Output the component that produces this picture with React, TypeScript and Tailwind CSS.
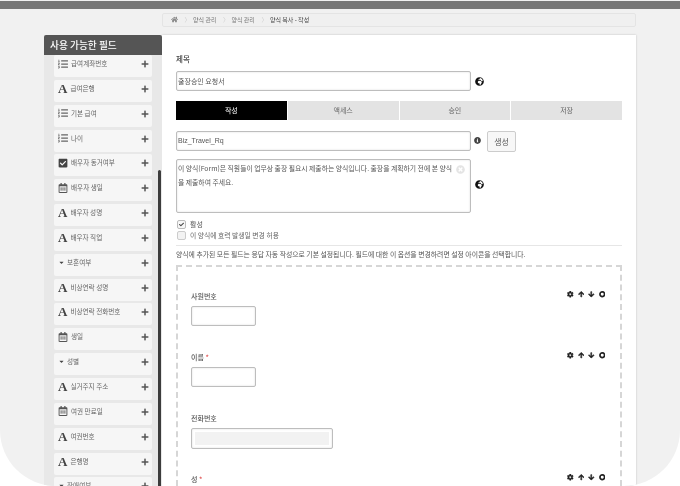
import React from "react";
import {
  FaArrowDown,
  FaArrowUp,
  FaCaretDown,
  FaCheck,
  FaCheckSquare,
  FaCog,
  FaGlobeAfrica,
  FaHome,
  FaInfoCircle,
  FaListOl,
  FaPlus,
  FaRegCalendarAlt,
  FaTimesCircle,
} from "react-icons/fa";

type FieldKind = "list" | "text" | "check" | "date" | "select";

const fields: { kind: FieldKind; label: string }[] = [
  { kind: "list", label: "급여계좌번호" },
  { kind: "text", label: "급여은행" },
  { kind: "list", label: "기본 급여" },
  { kind: "list", label: "나이" },
  { kind: "check", label: "배우자 동거여부" },
  { kind: "date", label: "배우자 생일" },
  { kind: "text", label: "배우자 성명" },
  { kind: "text", label: "배우자 직업" },
  { kind: "select", label: "보훈여부" },
  { kind: "text", label: "비상연락 성명" },
  { kind: "text", label: "비상연락 전화번호" },
  { kind: "date", label: "생일" },
  { kind: "select", label: "성별" },
  { kind: "text", label: "실거주지 주소" },
  { kind: "date", label: "여권 만료일" },
  { kind: "text", label: "여권번호" },
  { kind: "text", label: "은행명" },
  { kind: "select", label: "장애여부" },
];

const FieldIcon = ({ kind }: { kind: FieldKind }) => {
  if (kind === "text")
    return <span className="font-['Liberation_Serif',serif] text-[13px] font-bold leading-none text-[#444] mr-[3px]">A</span>;
  if (kind === "list") return <FaListOl className="text-[10px] text-[#666] mr-[3px]" />;
  if (kind === "check") return <FaCheckSquare className="text-[10px] text-[#444] mr-[3px]" />;
  if (kind === "date") return <FaRegCalendarAlt className="text-[10px] text-[#555] mr-[3px]" />;
  return <FaCaretDown className="text-[7px] text-[#444] mr-[2px]" />;
};

const FieldRow = ({ kind, label }: { kind: FieldKind; label: string }) => (
  <div className="h-[22px] shrink-0 bg-[#f6f6f6] rounded-[2px] flex items-start pt-[2px] pl-[4px] pr-[3px]">
    <div className="flex items-center h-[13px] flex-1 min-w-0">
      <FieldIcon kind={kind} />
      <span className="text-[6.6px] text-[#666] whitespace-nowrap mt-[1px]">{label}</span>
    </div>
    <FaPlus className="text-[8px] text-[#555] mt-[3px] shrink-0" />
  </div>
);

const inputBox = "border border-[#bdbdbd] rounded-[2px] bg-white shadow-[inset_0_0_2px_rgba(0,0,0,0.15)]";

const Tab = ({ label, active }: { label: string; active?: boolean }) => (
  <div
    className={`flex-1 flex items-center justify-center text-[7px] ${
      active ? "bg-black text-white" : "bg-[#e3e3e3] text-[#666]"
    }`}
  >
    {label}
  </div>
);

const FormField = ({
  label,
  required,
  boxClass,
  tools,
  children,
}: {
  label: string;
  required?: boolean;
  boxClass: string;
  tools?: boolean;
  children?: React.ReactNode;
}) => (
  <div className="h-[61px] shrink-0 flex flex-col">
    <div className="h-[23px] flex items-start justify-between">
      <span className="text-[7px] text-[#555] font-medium leading-[14px] mt-[6px]">
        {label}
        {required && <span className="text-[#e05050]"> *</span>}
      </span>
      {tools && (
        <span className="flex items-center gap-[4px] text-[#222] text-[6.5px] mt-[8px]">
          <FaCog className="stroke-[20]" />
          <FaArrowUp className="stroke-[40]" />
          <FaArrowDown className="stroke-[40]" />
          <svg viewBox="0 0 7 7" className="w-[6.5px] h-[6.5px]">
            <circle cx="3.5" cy="3.5" r="2.5" fill="none" stroke="currentColor" strokeWidth="1.8" />
          </svg>
        </span>
      )}
    </div>
    <div className={`${inputBox} ${boxClass}`}>{children}</div>
  </div>
);

export default function App() {
  return (
    <div className="w-[680px] h-[486px] bg-white overflow-hidden font-['Noto_Sans_CJK_KR','Liberation_Sans',sans-serif] blur-[0.4px]">
      <div className="h-full bg-[#f1f1f1] rounded-b-[56px] overflow-hidden flex flex-col pt-px">
        <div className="h-2 shrink-0 bg-[#777]" />
        <div className="flex-1 min-h-0 pl-[44px] pr-[44px] pt-1 flex flex-col">
          {/* breadcrumb */}
          <div className="ml-[118px] h-[14px] shrink-0 bg-[#f0f0f0] border border-[#e4e4e4] rounded-[2px] flex items-center pl-[8px] pb-[2px] text-[6px] text-[#777] gap-[6.5px]">
            <FaHome className="text-[7px] text-[#888]" />
            <span className="text-[#ccc]">〉</span>
            <span className="-ml-[4px]">양식 관리</span>
            <span className="text-[#ccc]">〉</span>
            <span className="-ml-[4px]">양식 관리</span>
            <span className="text-[#ccc]">〉</span>
            <span className="-ml-[4px] text-[#444]">양식 복사 - 작성</span>
          </div>

          <div className="flex flex-1 min-h-0 mt-[8px]">
            {/* sidebar */}
            <div className="w-[118px] shrink-0 relative flex flex-col bg-[#e8e8e8] overflow-hidden">
              <div className="h-5 shrink-0 bg-[#555] rounded-t-[2px] text-white text-[9.7px] font-medium flex items-center pl-[6px]">
                사용 가능한 필드
              </div>
              <div className="flex flex-col gap-[2.85px] pl-[10px] pr-[10px] min-h-0">
                {fields.map((f) => (
                  <FieldRow key={f.label} kind={f.kind} label={f.label} />
                ))}
              </div>
              <div className="absolute right-[1px] top-[135px] bottom-0 w-[3px] bg-[#3c3c3c] rounded-t-[2px]" />
            </div>

            {/* form panel */}
            <div className="flex-1 min-w-0 bg-white shadow-[0_0_2px_rgba(0,0,0,0.2)] px-[14px] pt-[18px] flex flex-col overflow-hidden">
              <div className="h-[18px] shrink-0 text-[7.5px] font-medium text-[#444] leading-[11px]">제목</div>
              <div className="flex items-center shrink-0">
                <div className={`${inputBox} w-[295px] h-5 flex items-center pl-[1px] text-[7px] text-[#555]`}>출장승인 요청서</div>
                <FaGlobeAfrica className="ml-[4px] text-[9px] text-[#111]" />
              </div>

              <div className="flex h-[19px] mt-[10px] shrink-0 gap-px">
                <Tab label="작성" active />
                <Tab label="액세스" />
                <Tab label="승인" />
                <Tab label="저장" />
              </div>

              <div className="flex items-start mt-[11px] shrink-0">
                <div className={`${inputBox} w-[295px] h-5 flex items-center pl-[1px] text-[7px] text-[#555] font-['Liberation_Sans',sans-serif]`}>Biz_Travel_Rq</div>
                <FaInfoCircle className="ml-[3px] mt-[6px] text-[7px] text-[#444]" />
                <div className="ml-[6px] w-[29px] h-[21px] border border-[#ccc] rounded-[2px] bg-[#f7f7f7] flex items-center justify-center text-[8px] text-[#555]">생성</div>
              </div>

              <div className="flex items-center mt-[7px] shrink-0">
                <div className={`${inputBox} w-[295px] h-[54px] relative pl-[1px] pt-px text-[6.83px] leading-[14px] text-[#555]`}>
                  <div className="w-[278px] break-all">이 양식(Form)은 직원들이 업무상 출장 필요시 제출하는 양식입니다. 출장을 계획하기 전에 본 양식을 제출하여 주세요.</div>
                  <FaTimesCircle className="absolute right-[5px] top-[5px] text-[9px] text-[#e4e4e4]" />
                </div>
                <FaGlobeAfrica className="ml-[4px] -mt-[4px] text-[9px] text-[#111]" />
              </div>

              <div className="flex items-center mt-[6px] h-[11px] shrink-0 text-[7px] text-[#555]">
                <span className="w-[9px] h-[9px] ml-px mr-[4px] border border-[#bbb] rounded-[2px] flex items-center justify-center bg-[#f7f7f7]">
                  <FaCheck className="text-[5px] text-[#444]" />
                </span>
                활성
              </div>
              <div className="flex items-center h-[11px] shrink-0 text-[6.8px] text-[#666]">
                <span className="w-[9px] h-[9px] ml-px mr-[4px] border border-[#ccc] rounded-[2px] bg-[#f3f3f3]" />
                이 양식에 효력 발생일 변경 허용
              </div>

              <div className="h-px bg-[#e6e6e6] mt-[4px] shrink-0" />
              <div className="h-[19px] shrink-0 flex items-center pb-[3px] text-[6.85px] text-[#555] whitespace-nowrap">
                양식에 추가된 모든 필드는 응답 자동 작성으로 기본 설정됩니다. 필드에 대한 이 옵션을 변경하려면 설정 아이콘을 선택합니다.
              </div>

              <div className="flex-1 min-h-0 border-2 border-b-0 border-dashed border-[#d6d6d6] pl-[13px] pr-[15px] pt-[16px] flex flex-col overflow-hidden">
                <FormField label="사원번호" tools boxClass="w-[65px] h-5" />
                <FormField label="이름" required tools boxClass="w-[65px] h-5" />
                <FormField label="전화번호" boxClass="w-[142px] h-[21px] p-[3px]">
                  <div className="h-full bg-[#f2f2f2]" />
                </FormField>
                <FormField label="성" required tools boxClass="w-[65px] h-5" />
              </div>
            </div>
          </div>
        </div>
      </div>
    </div>
  );
}
